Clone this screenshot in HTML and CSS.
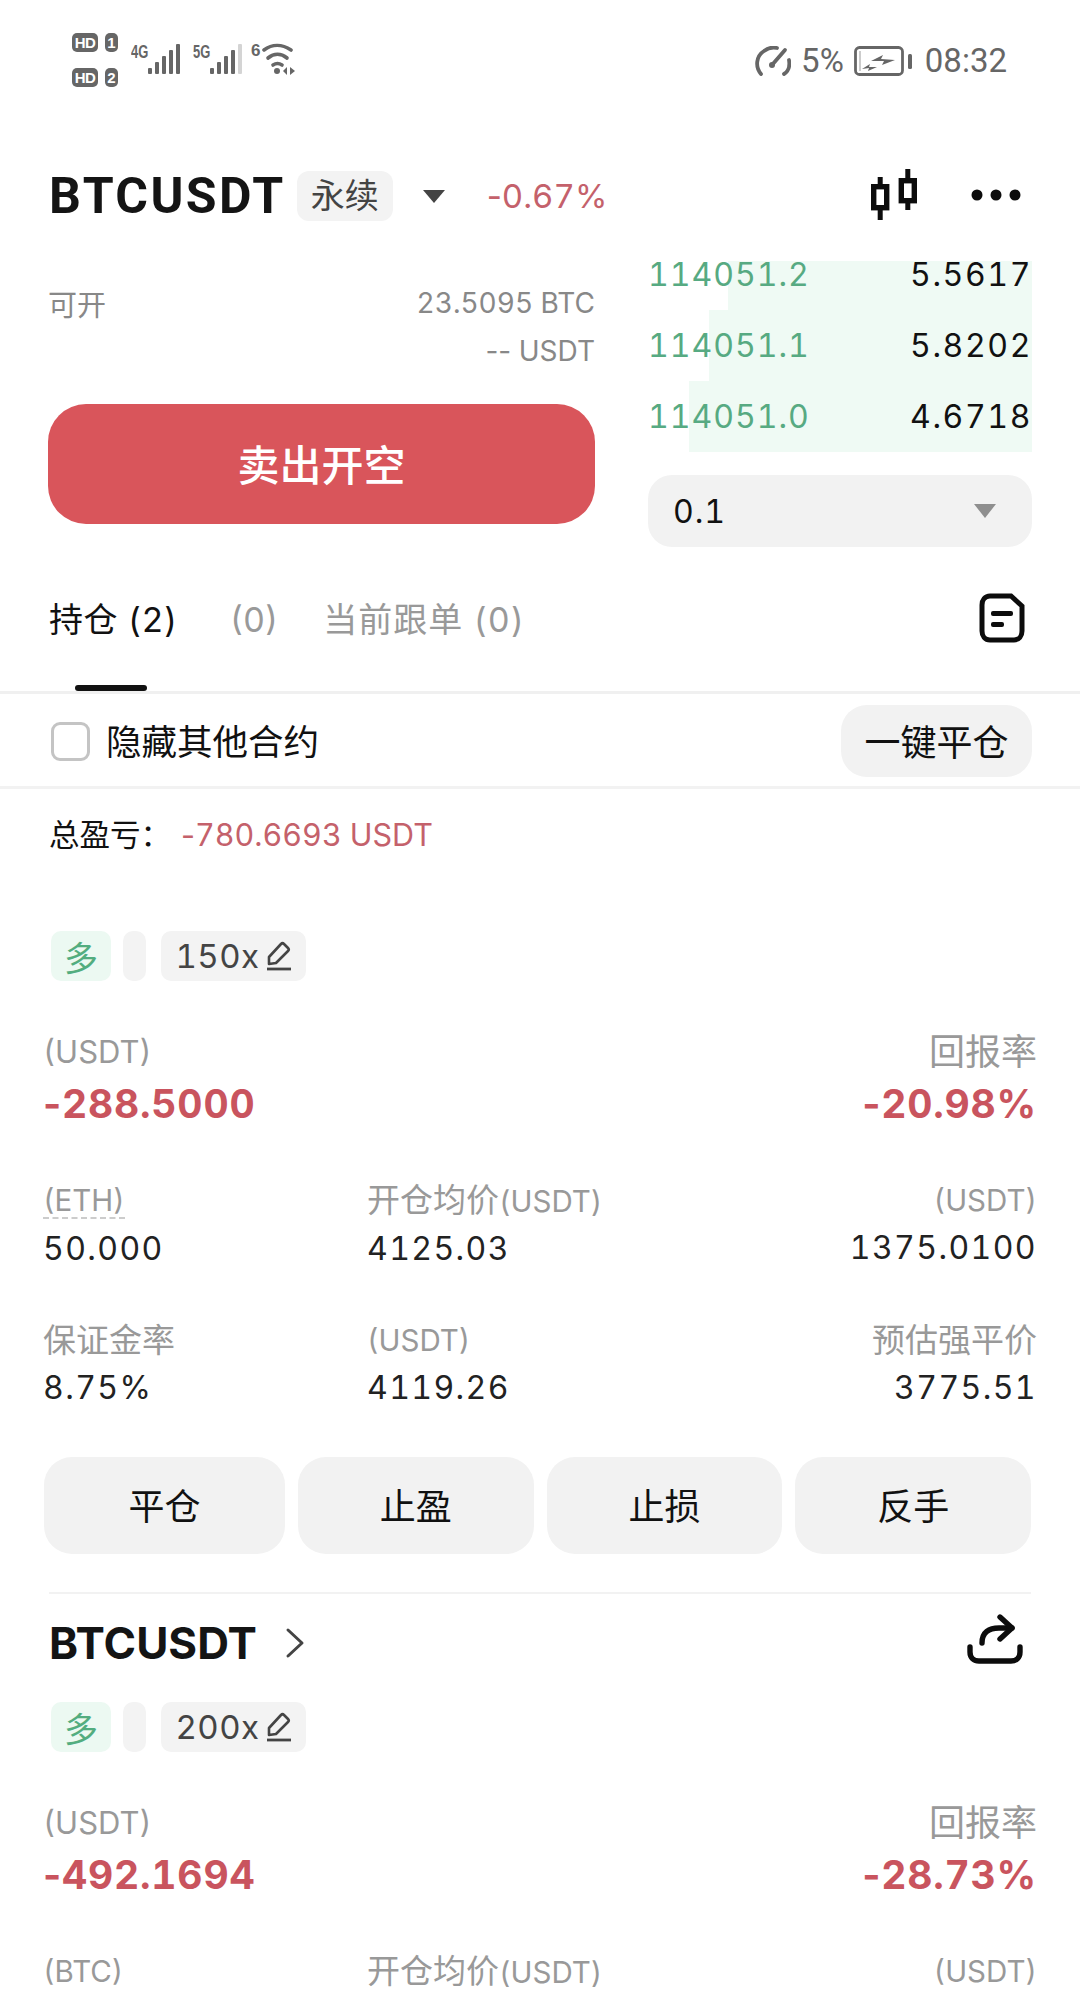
FILE: index.html
```html
<!DOCTYPE html>
<html lang="zh">
<head>
<meta charset="utf-8">
<title>BTCUSDT</title>
<link rel="stylesheet" href="styles.css">
</head>
<body>
<div class="screen">
  <header class="status">
    <div class="status-left">
      <div class="sims">
        <div class="sim"><span class="hd">HD</span><span class="slot">1</span></div>
        <div class="sim"><span class="hd">HD</span><span class="slot">2</span></div>
      </div>
      <div class="net">
        <span class="gen">4G</span>
        <svg class="bars" width="32" height="30" viewBox="0 0 32 30"><g fill="#666"><rect x="0" y="24" width="4" height="6" rx="1"/><rect x="7" y="18" width="4" height="12" rx="1"/><rect x="14" y="12" width="4" height="18" rx="1"/><rect x="21" y="6" width="4" height="24" rx="1"/><rect x="28" y="0" width="4" height="30" rx="1"/></g></svg>
      </div>
      <div class="net">
        <span class="gen">5G</span>
        <svg class="bars" width="32" height="30" viewBox="0 0 32 30"><g fill="#666"><rect x="0" y="24" width="4" height="6" rx="1"/><rect x="7" y="18" width="4" height="12" rx="1"/><rect x="14" y="12" width="4" height="18" rx="1"/><rect x="21" y="6" width="4" height="24" rx="1"/><rect x="28" y="0" width="4" height="30" rx="1" fill="#d4d4d4"/></g></svg>
      </div>
      <div class="net wifi">
        <span class="gen six">6</span>
        <svg width="34" height="32" viewBox="0 0 34 32"><g fill="none" stroke="#666" stroke-width="3.6" stroke-linecap="round"><path d="M2 7C10 1 20 1 29 7"/><path d="M6 15C12 10 19 10 25 15"/><path d="M11 22C14 20 17 20 20 22"/></g><circle cx="15" cy="28" r="3" fill="#666"/><path d="M21 28l4-4v8zM28 24l5 4-5 4z" fill="#666"/></svg>
      </div>
    </div>
    <div class="status-right">
      <svg width="36" height="30" viewBox="0 0 36 30"><g fill="none" stroke="#666" stroke-width="3.8" stroke-linecap="round"><path d="M6 28C0 21 1 10 9 5C13 2 18 1 22 2"/><path d="M34 14C35 20 34 25 29 28"/><path d="M17 19L30 4"/></g><circle cx="17" cy="19" r="3" fill="#666"/></svg>
      <span class="pct">5%</span>
      <svg width="58" height="30" viewBox="0 0 58 30"><rect x="1.5" y="1.5" width="47" height="27" rx="4" fill="none" stroke="#666" stroke-width="2.8"/><rect x="5" y="5" width="2" height="20" fill="#ccc"/><path d="M17 15l12-6-2 4 14 1-13 5 2-4zM8 23l8-5-1 3 8 0-9 4 1-3z" fill="#666"/><rect x="54" y="8" width="4" height="15" rx="1.5" fill="#666"/></svg>
      <span class="clock">08:32</span>
    </div>
  </header>

  <section class="topbar">
    <div class="pair">
      <h1 class="symbol">BTCUSDT</h1>
      <span class="perp">永续</span>
      <span class="caret"></span>
      <span class="change"><span class="minus">-</span>0.67%</span>
    </div>
    <div class="top-actions">
      <svg class="candles" width="46" height="51" viewBox="0 0 46 51"><g fill="none" stroke="#0c0c0c" stroke-width="5.4"><rect x="2.7" y="17.7" width="13" height="21"/><rect x="30.3" y="11.7" width="13" height="20"/></g><g fill="#0c0c0c"><rect x="6.7" y="8" width="5" height="10"/><rect x="6.7" y="38" width="5" height="13"/><rect x="34.3" y="0" width="5" height="12"/><rect x="34.3" y="31" width="5" height="10"/></g></svg>
      <svg class="dots" width="50" height="12" viewBox="0 0 50 12"><g fill="#0c0c0c"><circle cx="6" cy="6" r="5.5"/><circle cx="25" cy="6" r="5.5"/><circle cx="44" cy="6" r="5.5"/></g></svg>
    </div>
  </section>

  <section class="trade">
    <div class="order">
      <div class="avail">
        <div class="avail-row"><span class="avail-name">可开</span><span>23.5095 BTC</span></div>
        <div class="avail-row end"><span><span class="minus">--</span> USDT</span></div>
      </div>
      <button class="sell">卖出开空</button>
    </div>
    <div class="book">
      <div class="levels">
        <div class="level first"><i class="depth" style="width:304px"></i><span class="price">114051.2</span><span class="qty">5.5617</span></div>
        <div class="level"><i class="depth" style="width:323px"></i><span class="price">114051.1</span><span class="qty">5.8202</span></div>
        <div class="level last"><i class="depth" style="width:343px"></i><span class="price">114051.0</span><span class="qty">4.6718</span></div>
      </div>
      <div class="tick"><span>0.1</span><i class="tick-caret"></i></div>
    </div>
  </section>

  <nav class="tabs">
    <div class="tab active">持仓 (2)</div>
    <div class="tab count">(0)</div>
    <div class="tab copy">当前跟单 (0)</div>
    <svg class="note" width="46" height="50" viewBox="0 0 46 50"><path d="M11 3H32L43 13V38C43 43 40 47 35 47H11C6 47 3 43 3 38V12C3 7 6 3 11 3Z" fill="none" stroke="#0c0c0c" stroke-width="5"/><rect x="12" y="18" width="22" height="5" rx="2" fill="#0c0c0c"/><rect x="12" y="29" width="13" height="5" rx="2" fill="#0c0c0c"/></svg>
  </nav>

  <div class="filter">
    <label class="hide"><span class="box"></span><span class="hide-text">隐藏其他合约</span></label>
    <button class="close-all">一键平仓</button>
  </div>

  <div class="total"><span class="total-name">总盈亏：</span><span class="loss"><span class="minus">-</span>780.6693 USDT</span></div>

  <article class="position first-pos">
    <div class="tags">
      <span class="tag long">多</span>
      <span class="tag blank"></span>
      <span class="tag lev">150x<svg width="28" height="30" viewBox="0 0 28 30"><path d="M5 16L17 3C18 2 19 2 20 3L24 7C25 8 25 9 24 10L12 22L5 23Z" fill="none" stroke="#444" stroke-width="2.6" stroke-linejoin="round"/><path d="M3 28H27" stroke="#444" stroke-width="2.8"/></svg></span>
    </div>
    <div class="pnl">
      <div><div class="label">(USDT)</div><div class="big"><span class="minus">-</span>288.5000</div></div>
      <div class="right"><div class="label cn">回报率</div><div class="big"><span class="minus">-</span>20.98%</div></div>
    </div>
    <div class="stats">
      <div><div class="label"><span class="dashed">(ETH)</span></div><div class="val">50.000</div></div>
      <div><div class="label"><span class="cn">开仓均价</span>(USDT)</div><div class="val">4125.03</div></div>
      <div class="right"><div class="label">(USDT)</div><div class="val">1375.0100</div></div>
      <div><div class="label cn">保证金率</div><div class="val">8.75%</div></div>
      <div><div class="label">(USDT)</div><div class="val">4119.26</div></div>
      <div class="right"><div class="label cn">预估强平价</div><div class="val">3775.51</div></div>
    </div>
    <div class="actions">
      <button class="act wide">平仓</button>
      <button class="act">止盈</button>
      <button class="act">止损</button>
      <button class="act">反手</button>
    </div>
  </article>

  <article class="position">
    <div class="pos-head">
      <div class="pos-title">
        <h2 class="pos-symbol">BTCUSDT</h2>
        <svg width="20" height="32" viewBox="0 0 20 32"><path d="M3 3L17 16L3 29" fill="none" stroke="#444" stroke-width="3" stroke-linecap="round" stroke-linejoin="round"/></svg>
      </div>
      <svg class="share" width="56" height="52" viewBox="0 0 56 52"><g fill="none" stroke="#0c0c0c" stroke-width="5.4" stroke-linecap="round" stroke-linejoin="round"><path d="M15 29C15 18 22 14 32 14H45"/><path d="M33 3L45 14L33 25"/><path d="M3 33V38C3 44 7 47 12 47H44C49 47 53 44 53 38V33"/></g></svg>
    </div>
    <div class="tags">
      <span class="tag long">多</span>
      <span class="tag blank"></span>
      <span class="tag lev">200x<svg width="28" height="30" viewBox="0 0 28 30"><path d="M5 16L17 3C18 2 19 2 20 3L24 7C25 8 25 9 24 10L12 22L5 23Z" fill="none" stroke="#444" stroke-width="2.6" stroke-linejoin="round"/><path d="M3 28H27" stroke="#444" stroke-width="2.8"/></svg></span>
    </div>
    <div class="pnl">
      <div><div class="label">(USDT)</div><div class="big"><span class="minus">-</span>492.1694</div></div>
      <div class="right"><div class="label cn">回报率</div><div class="big"><span class="minus">-</span>28.73%</div></div>
    </div>
    <div class="stats">
      <div><div class="label">(BTC)</div></div>
      <div><div class="label"><span class="cn">开仓均价</span>(USDT)</div></div>
      <div class="right"><div class="label">(USDT)</div></div>
    </div>
  </article>
</div>
</body>
</html>
```

FILE: styles.css
```css
* { box-sizing: border-box; }
html, body { margin: 0; padding: 0; background: #fff; }
body { width: 1080px; height: 1989px; overflow: hidden; }
.screen {
  width: 1080px;
  height: 1989px;
  overflow: hidden;
  color: #111;
  font-family: Inter, "Noto Sans CJK SC", sans-serif;
  font-feature-settings: "tnum";
}
.minus { font-feature-settings: normal; }
button { font-family: inherit; font-feature-settings: inherit; border: 0; margin: 0; padding: 0; }
h1, h2 { margin: 0; }

/* Status bar */
.status {
  height: 100px;
  padding: 33px 73px 0 72px;
  display: flex;
  justify-content: space-between;
  align-items: flex-start;
}
.status-left { display: flex; align-items: flex-start; }
.sims { display: flex; flex-direction: column; gap: 16px; width: 46px; margin-right: 13px; }
.sim { display: flex; gap: 7px; height: 19px; }
.hd, .slot {
  background: #666;
  color: #fff;
  font: 700 15px/19px "Liberation Sans", sans-serif;
  border-radius: 5px;
  text-align: center;
}
.hd { width: 26px; letter-spacing: -.5px; }
.slot { width: 13px; }
.net { display: flex; align-items: flex-start; margin: 11px 13px 0 0; gap: 1px; }
.gen {
  width: 16px;
  font: 700 18px/16px "Liberation Sans", sans-serif;
  color: #666;
  transform: scaleX(.72);
  transform-origin: left top;
  white-space: nowrap;
}
.six { width: 8px; font-size: 17px; transform: none; }
.wifi { gap: 3px; margin: 10px 0 0 -4px; }
.status-right {
  display: flex;
  align-items: center;
  gap: 10px;
  margin-top: 10px;
  color: #666;
  font: 400 33px/36px Roboto, sans-serif;
}
.clock { margin-left: 3px; }

/* Pair header */
.topbar {
  height: 95px;
  margin-top: 48px;
  padding: 1px 59px 0 49px;
  display: flex;
  justify-content: space-between;
  align-items: center;
}
.pair { display: flex; align-items: center; }
.symbol { font: 700 50px/56px Roboto, sans-serif; letter-spacing: 2.4px; color: #141414; }
.perp {
  margin-left: 11px;
  width: 96px;
  height: 50px;
  border-radius: 12px;
  background: #f3f3f3;
  color: #444;
  font-size: 34px;
  line-height: 50px;
  text-align: center;
}
.caret {
  width: 0; height: 0;
  margin-left: 30px;
  border-left: 11px solid transparent;
  border-right: 11px solid transparent;
  border-top: 13px solid #444;
}
.change { margin-left: 42px; color: #c4616b; font-size: 33px; font-weight: 400; }
.top-actions { display: flex; align-items: center; gap: 54px; }
.candles { margin-bottom: 4px; }
.dots { margin-bottom: 2px; }

/* Order form + book */
.trade {
  margin-top: 18px;
  height: 290px;
  padding: 0 48px;
  display: flex;
  justify-content: space-between;
}
.order { width: 547px; }
.avail { color: #888; font-size: 28px; height: 143px; padding-top: 18px; }
.avail-row { display: flex; justify-content: space-between; height: 48px; align-items: center; }
.avail-row.end { justify-content: flex-end; }
.avail-name { font-size: 29px; }
.sell {
  display: block;
  width: 100%;
  height: 120px;
  padding-bottom: 4px;
  border-radius: 38px;
  background: #d9555b;
  color: #fff;
  font-size: 42px;
  font-weight: 500;
}
.book { width: 384px; }
.levels { height: 214px; margin-top: -23px; }
.level {
  position: relative;
  height: 71px;
  display: flex;
  justify-content: space-between;
  align-items: center;
  font-size: 32px;
  letter-spacing: 1px;
}
.level.first { margin-top: -12px; height: 72px; }
.depth { position: absolute; right: 0; top: 0; bottom: 0; background: #effaf4; }
.level.first .depth { top: 23px; }
.price { position: relative; color: #57aa82; }
.qty { position: relative; color: #111; letter-spacing: 1.6px; }
.tick {
  height: 72px;
  margin-top: 23px;
  border-radius: 24px;
  background: #f2f2f2;
  padding: 0 36px 0 25px;
  display: flex;
  justify-content: space-between;
  align-items: center;
  font-size: 32px;
  letter-spacing: 1px;
}
.tick-caret {
  width: 0; height: 0;
  border-left: 11px solid transparent;
  border-right: 11px solid transparent;
  border-top: 14px solid #8f8f8f;
}

/* Tabs */
.tabs {
  position: relative;
  height: 143px;
  padding: 38px 54px 0 49px;
  display: flex;
  align-items: flex-start;
  gap: 52px;
  border-bottom: 3px solid #f0f0f0;
}
.tab { font-size: 34px; line-height: 62px; color: #999; letter-spacing: 1px; font-weight: 400; }
.tab.count { letter-spacing: 0; }
.tab.copy { margin-left: -7px; }
.tab.active { color: #111; position: relative; letter-spacing: .5px; }
.tab.active::after {
  content: "";
  position: absolute;
  left: 26px;
  bottom: -40px;
  width: 72px;
  height: 6px;
  border-radius: 3px;
  background: #111;
}
.note { position: absolute; right: 55px; top: 42px; }

/* Filter row */
.filter {
  height: 95px;
  padding: 11px 48px 0 51px;
  display: flex;
  justify-content: space-between;
  border-bottom: 3px solid #f2f2f2;
}
.hide { display: flex; align-items: center; gap: 16px; height: 72px; font-size: 35.5px; color: #111; }
.hide-text { margin-bottom: 3px; }
.box { width: 39px; height: 39px; border: 3px solid #c4c4c4; border-radius: 9px; }
.close-all {
  width: 191px;
  height: 72px;
  padding-bottom: 2px;
  border-radius: 26px;
  background: #f2f2f2;
  color: #111;
  font-size: 36px;
}

/* Account total */
.total { padding: 25px 0 0 49px; font-size: 30.5px; line-height: 42px; color: #111; height: 96px; }
.total-name { margin-right: 10px; }
.loss { color: #c4616b; }

/* Position card */
.position { padding: 0 43px 0 43px; }
.first-pos { padding-top: 46px; }
.tags { display: flex; align-items: center; margin-left: 8px; height: 50px; }
.tag { height: 50px; border-radius: 10px; background: #f3f3f3; display: flex; align-items: center; justify-content: center; }
.long { width: 60px; background: #ecf9f2; color: #53ad7f; font-size: 34px; }
.blank { width: 23px; margin: 0 15px 0 12px; }
.lev { width: 145px; color: #444; font-size: 33px; gap: 4px; letter-spacing: .5px; }
.pnl { display: flex; justify-content: space-between; margin-top: 53px; }
.right { text-align: right; }
.label { font-size: 31px; line-height: 36px; color: #999; white-space: nowrap; }
.label.cn { font-size: 36px; }
.big { font-size: 39px; line-height: 50px; font-weight: 700; color: #c9545e; margin-top: 9px; letter-spacing: .8px; }
.stats {
  display: grid;
  grid-template-columns: 324px 1fr auto;
  row-gap: 51px;
  margin-top: 53px;
}
.stats .label { font-size: 29.5px; }
.stats .label.cn, .stats .cn { font-size: 33px; }
.dashed { display: inline-block; border-bottom: 2px dashed #ccc; line-height: 33px; }
.val { font-size: 32px; line-height: 44px; margin-top: 8px; color: #222; letter-spacing: 1.4px; }
.actions { display: flex; gap: 13px; margin: 47px 6px 0 1px; }
.act { flex: 1; height: 97px; padding-bottom: 3px; border-radius: 28px; background: #f2f2f2; font-size: 36px; color: #111; }
.act.wide { flex: 0 0 241px; }
.pos-head {
  margin: 38px 6px 0 6px;
  border-top: 2px solid #f2f2f2;
  height: 110px;
  padding-bottom: 10px;
  display: flex;
  justify-content: space-between;
  align-items: center;
}
.pos-title { display: flex; align-items: center; gap: 28px; }
.pos-symbol { font: 700 44px/50px Inter, sans-serif; color: #141414; }
.share { margin: 0 8px 6px 0; }
```
